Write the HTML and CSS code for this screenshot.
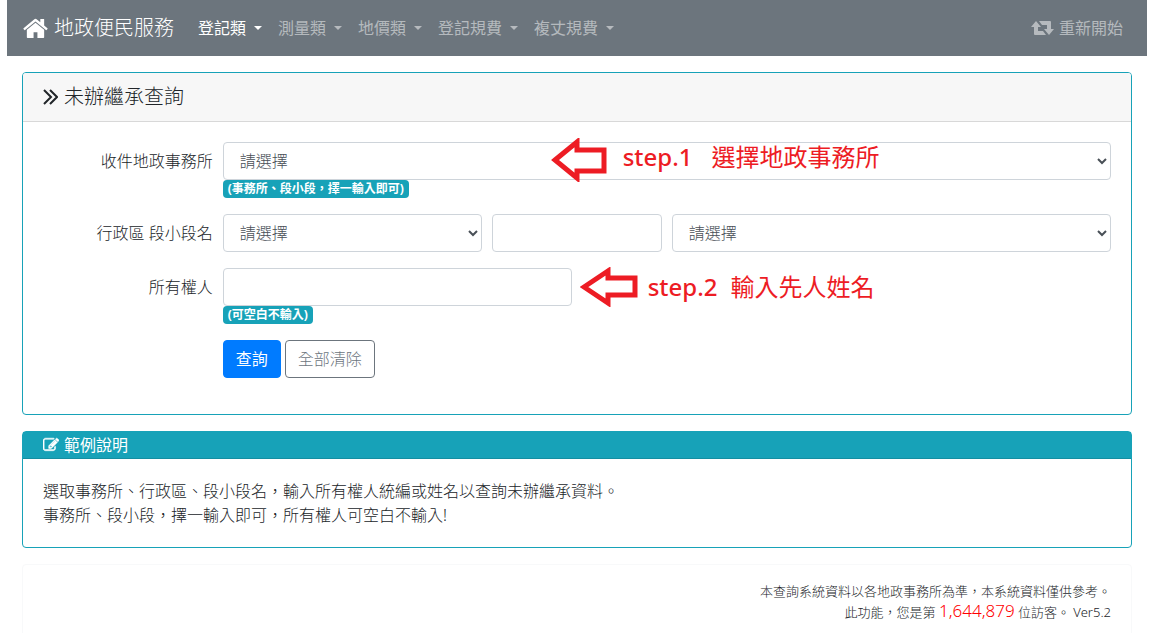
FILE: index.html
```html
<!DOCTYPE html>
<html lang="zh-Hant">
<head>
<meta charset="utf-8">
<title>地政便民服務</title>
<link rel="stylesheet" href="styles.css">
</head>
<body>
<nav class="navbar">
  <a class="brand" href="#">
    <svg class="icon-home" viewBox="64 0 1664 1792" aria-hidden="true"><path fill="currentColor" d="M1472 992v480q0 26-19 45t-45 19h-384v-384h-256v384h-384q-26 0-45-19t-19-45v-480q0-1 .5-3t.5-3l575-474 575 474q1 2 1 6zm223-69l-62 74q-8 9-21 11h-3q-13 0-21-7l-692-577-692 577q-12 8-24 7-13-2-21-11l-62-74q-8-10-7-23.5t11-21.5l719-599q32-26 76-26t76 26l244 204v-195q0-14 9-23t23-9h192q14 0 23 9t9 23v408l219 182q10 8 11 21.5t-7 23.5z"/></svg>
    <span>地政便民服務</span>
  </a>
  <div class="menu">
    <a class="menu-link active" href="#">登記類<span class="caret"></span></a>
    <a class="menu-link" href="#">測量類<span class="caret"></span></a>
    <a class="menu-link" href="#">地價類<span class="caret"></span></a>
    <a class="menu-link" href="#">登記規費<span class="caret"></span></a>
    <a class="menu-link" href="#">複丈規費<span class="caret"></span></a>
  </div>
  <a class="menu-link restart" href="#">
    <svg class="icon-restart" viewBox="0 0 23 14" aria-hidden="true"><path fill="currentColor" d="M5 0L10 6H7V10H12L15 14H4Q3 14 3 13V6H0ZM18 14L13 8H16V4H11L8 0H19Q20 0 20 1V8H23Z"/></svg>
    <span>重新開始</span>
  </a>
</nav>

<main class="content">
  <section class="card">
    <h1 class="card-header">
      <svg class="icon-angles" viewBox="0 0 15 16" aria-hidden="true"><path fill="none" stroke="currentColor" stroke-width="2" d="M1 1L8 8L1 15M7 1L14 8L7 15"/></svg>
      <span>未辦繼承查詢</span>
    </h1>
    <form class="card-body form">
      <div class="row">
        <label class="label" for="office">收件地政事務所</label>
        <div class="field span-10">
          <select class="control" id="office"><option>請選擇</option></select>
          <span class="badge">(事務所、段小段，擇一輸入即可)</span>
          <div class="note note-office">
            <svg class="arrow" viewBox="0 0 56 44" aria-hidden="true"><path d="M4 22L26 4V12H53V33H26V40Z"/></svg>
            <span class="step">step.1</span><span>選擇地政事務所</span>
          </div>
        </div>
      </div>
      <div class="row">
        <label class="label" for="district">行政區 段小段名</label>
        <div class="field span-3"><select class="control" id="district"><option>請選擇</option></select></div>
        <div class="field span-2"><input class="control" type="text" aria-label="段小段名"></div>
        <div class="field span-5"><select class="control" aria-label="段小段"><option>請選擇</option></select></div>
      </div>
      <div class="row">
        <label class="label" for="owner">所有權人</label>
        <div class="field span-4">
          <input class="control" id="owner" type="text">
          <span class="badge">(可空白不輸入)</span>
          <div class="note note-owner">
            <svg class="arrow" viewBox="0 0 58 40" aria-hidden="true"><path d="M4 20L28 4V11H55V28H28V36Z"/></svg>
            <span class="step">step.2</span><span>輸入先人姓名</span>
          </div>
        </div>
      </div>
      <div class="row">
        <div class="actions">
          <button class="btn btn-primary" type="button">查詢</button>
          <button class="btn btn-outline" type="reset">全部清除</button>
        </div>
      </div>
    </form>
  </section>

  <section class="card">
    <h2 class="card-header card-header-info">
      <svg class="icon-edit" viewBox="0 0 1792 1792" aria-hidden="true"><path fill="currentColor" stroke="currentColor" stroke-width="60" d="M888 1184l116-116-152-152-116 116v56h96v96h56zm440-720q-16-16-33 1l-350 350q-17 17-1 33t33-1l350-350q17-17 1-33zm80 594v190q0 119-84.5 203.5t-203.5 84.5h-832q-119 0-203.5-84.5t-84.5-203.5v-832q0-119 84.5-203.5t203.5-84.5h832q63 0 117 25 15 7 18 23 3 17-9 29l-49 49q-14 14-32 8-23-6-45-6h-832q-66 0-113 47t-47 113v832q0 66 47 113t113 47h832q66 0 113-47t47-113v-126q0-13 9-22l64-64q15-15 35-7t20 29zm-96-738l288 288-672 672h-288v-288zm444 132l-92 92-288-288 92-92q28-28 68-28t68 28l152 152q28 28 28 68t-28 68z"/></svg>
      <span>範例說明</span>
    </h2>
    <p class="card-body">選取事務所、行政區、段小段名，輸入所有權人統編或姓名以查詢未辦繼承資料。<br>事務所、段小段，擇一輸入即可，所有權人可空白不輸入!</p>
  </section>

  <footer class="card card-footer">
    <p class="footer-line">本查詢系統資料以各地政事務所為準，本系統資料僅供參考。</p>
    <p class="footer-line">此功能，您是第 <span class="count">1,644,879</span> 位訪客。 Ver5.2</p>
  </footer>
</main>
</body>
</html>
```
FILE: styles.css
```css
* {
  box-sizing: border-box;
}

html {
  scrollbar-width: none;
}

body {
  margin: 0 5px 0 7px;
  background: #fff;
  color: #212529;
  font: 300 16px/24px "Noto Sans", "Noto Sans CJK TC", sans-serif;
}

a {
  color: inherit;
  text-decoration: none;
}

h1, h2, p {
  margin: 0;
  font-size: inherit;
  font-weight: inherit;
}

svg {
  flex: none;
  display: block;
}

.navbar {
  display: flex;
  align-items: center;
  height: 56px;
  padding: 0 16px;
  background: #6c757d;
  font-weight: 400;
}

.brand {
  display: flex;
  align-items: center;
  gap: 6px;
  margin-right: 16px;
  color: #fff;
  font-size: 20px;
  font-weight: 300;
}

.icon-home {
  width: 25px;
  height: 27px;
}

.menu {
  display: flex;
}

.menu-link {
  display: flex;
  align-items: center;
  gap: 8px;
  padding: 8px;
  color: rgba(255, 255, 255, 0.5);
  white-space: nowrap;
}

.menu-link.active {
  color: #fff;
}

.caret {
  border: 4px solid transparent;
  border-top-color: currentColor;
  border-bottom: 0;
}

.restart {
  gap: 5px;
  margin-left: auto;
}

.icon-restart {
  width: 23px;
  height: 14px;
}

.content {
  display: flex;
  flex-direction: column;
  gap: 16px;
  padding: 16px 15px;
}

.card {
  border: 1px solid #17a2b8;
  border-radius: 4px;
}

.card-header {
  display: flex;
  align-items: center;
  gap: 6px;
  padding: 12px 20px;
  border-bottom: 1px solid #d8d8d8;
  border-radius: 3px 3px 0 0;
  background: #f7f7f7;
  font-size: 20px;
}

.icon-angles {
  width: 15px;
  height: 16px;
}

.card-header-info {
  gap: 5px;
  padding: 1px 20px;
  border-bottom-color: #148ea1;
  border-radius: 0;
  background: #17a2b8;
  color: #fff;
  font-size: 16px;
  font-weight: 400;
}

.icon-edit {
  width: 16px;
  height: 18px;
}

.card-body {
  padding: 20px;
}

.form {
  display: flex;
  flex-direction: column;
  gap: 16px;
  padding-bottom: 36px;
}

.row {
  display: grid;
  grid-template-columns: repeat(12, minmax(0, 1fr));
  column-gap: 10px;
  align-items: start;
}

.label {
  grid-column: span 2;
  padding: 7px 0;
  text-align: right;
}

.field {
  position: relative;
  display: flex;
  flex-direction: column;
  align-items: flex-start;
}

.span-2 { grid-column: span 2; }
.span-3 { grid-column: span 3; }
.span-4 { grid-column: span 4; }
.span-5 { grid-column: span 5; }
.span-10 { grid-column: span 10; }

.control {
  width: 100%;
  height: 38px;
  padding: 6px 12px;
  border: 1px solid #ced4da;
  border-radius: 4px;
  background-color: #fff;
  color: #495057;
  font: inherit;
}

.badge {
  padding: 3px 5px;
  border-radius: 4px;
  background: #17a2b8;
  color: #fff;
  font-size: 12px;
  font-weight: 700;
  line-height: 12px;
  white-space: nowrap;
}

.note {
  position: absolute;
  display: flex;
  align-items: center;
  color: #ed1c24;
  font-size: 24px;
  font-weight: 400;
  white-space: nowrap;
  pointer-events: none;
}

.step {
  font-weight: 500;
}

.note-office {
  top: -4px;
  left: 328px;
  align-items: flex-start;
  line-height: 38px;
}

.note-office .step {
  margin: 0 19px 0 16px;
}

.note-owner {
  top: -1px;
  left: 357px;
}

.note-owner .step {
  margin: 0 13px 0 10px;
}

.arrow {
  fill: #fff;
  stroke: #ed1c24;
  stroke-width: 5;
}

.note-office .arrow {
  width: 56px;
  height: 44px;
}

.note-owner .arrow {
  width: 58px;
  height: 40px;
}

.actions {
  grid-column: 3 / -1;
  display: flex;
  gap: 4px;
}

.btn {
  padding: 6px 12px;
  border: 1px solid #007bff;
  border-radius: 4px;
  font: inherit;
}

.btn-primary {
  background: #007bff;
  color: #fff;
  font-weight: 400;
}

.btn-outline {
  border-color: #6c757d;
  background: #fff;
  color: #6c757d;
}

.card-footer {
  padding: 16px 20px;
  border-color: #f8f9fa;
  text-align: right;
  font-size: 13px;
}

.footer-line {
  line-height: 20px;
}

.count {
  color: #f00;
  font-size: 17px;
}
```
